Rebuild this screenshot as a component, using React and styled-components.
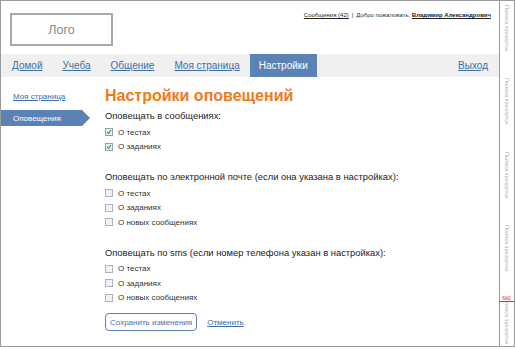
import React from "react";
import styled, { createGlobalStyle } from "styled-components";

const GlobalStyle = createGlobalStyle`
  html, body {
    margin: 0;
    padding: 0;
    background: #fff;
  }
  body {
    font-family: "Liberation Sans", Arial, sans-serif;
    color: #222;
  }
`;

const Frame = styled.div`
  display: flex;
  width: 513px;
  height: 345px;
  border: 1px solid #9a9a9a;
  position: relative;
`;

const Main = styled.div`
  flex: 1;
  display: flex;
  flex-direction: column;
`;

const Header = styled.div`
  display: flex;
  justify-content: space-between;
  align-items: flex-start;
  height: 53px;
  padding: 0 8px 0 9px;
`;

const Logo = styled.div`
  margin-top: 12px;
  width: 99px;
  height: 29px;
  border: 2px solid #a8a8a8;
  display: flex;
  align-items: center;
  justify-content: center;
  color: #888;
  font-size: 12.5px;
`;

const UserBar = styled.div`
  margin-top: 11px;
  font-size: 6px;
  color: #333;
  display: flex;
  gap: 3px;
  a {
    color: #222;
    text-decoration: underline;
  }
  b a {
    font-weight: bold;
  }
`;

const Nav = styled.nav`
  display: flex;
  height: 23px;
  background: #f0f0f0;
  padding-left: 1px;
`;

const NavItem = styled.a`
  display: flex;
  align-items: center;
  padding: 0 ${(p) => (p.$active ? "9px" : "10px")};
  font-size: 10px;
  color: ${(p) => (p.$active ? "#fff" : "#3d6ea8")};
  background: ${(p) => (p.$active ? "#5b82b5" : "transparent")};
  text-decoration: ${(p) => (p.$active ? "none" : "underline")};
  margin-left: ${(p) => (p.$push ? "auto" : "0")};
  padding-right: ${(p) => (p.$push ? "11px" : "")};
`;

const Body = styled.div`
  display: flex;
  flex: 1;
`;

const Sidebar = styled.div`
  width: 104px;
  padding-top: 14px;
  display: flex;
  flex-direction: column;
  gap: 7px;
`;

const SideLink = styled.a`
  font-size: 8px;
  line-height: 12px;
  color: #3d6ea8;
  text-decoration: underline;
  padding-left: 12px;
`;

const SideActive = styled.div`
  position: relative;
  width: 69px;
  height: 16px;
  background: #5b82b5;
  color: #fff;
  font-size: 8px;
  display: flex;
  align-items: center;
  padding-left: 12px;
  &::after {
    content: "";
    position: absolute;
    right: -8px;
    top: 0;
    border-top: 8px solid transparent;
    border-bottom: 8px solid transparent;
    border-left: 8px solid #5b82b5;
  }
`;

const Content = styled.div`
  flex: 1;
  padding-top: 9px;
  display: flex;
  flex-direction: column;
`;

const Title = styled.h1`
  margin: 0 0 4px;
  font-size: 16px;
  line-height: 20px;
  font-weight: bold;
  color: #f07a1a;
`;

const Section = styled.div`
  display: flex;
  flex-direction: column;
  margin-bottom: 17px;
`;

const SectionLabel = styled.div`
  font-size: 9.4px;
  line-height: 12px;
  color: #222;
  margin-bottom: 3px;
`;

const Option = styled.label`
  display: flex;
  align-items: center;
  height: 14.5px;
  font-size: 8px;
  color: #333;
  gap: 5px;
`;

const Box = styled.span`
  width: 6px;
  height: 6px;
  border: 1px solid ${(p) => (p.$checked ? "#8fa5bd" : "#a9b4bf")};
  background: ${(p) => (p.$checked ? "#e6f0f8" : "#eef3f8")};
  display: flex;
  align-items: center;
  justify-content: center;
`;

const Actions = styled.div`
  display: flex;
  align-items: center;
  gap: 10px;
  margin-top: -9px;
`;

const SaveButton = styled.button`
  height: 18px;
  padding: 0 4px;
  border: 1px solid #5b82b5;
  border-radius: 4px;
  background: #fff;
  color: #4a72a8;
  font-family: "Liberation Sans", Arial, sans-serif;
  font-size: 8px;
`;

const CancelLink = styled.a`
  font-size: 8px;
  color: #3d6ea8;
  text-decoration: underline;
`;

const Strip = styled.div`
  width: 14px;
  border-left: 1px solid #9a9a9a;
  display: flex;
  flex-direction: column;
  align-items: center;
  justify-content: space-between;
  padding: 4px 0 2px;
`;

const StripText = styled.span`
  writing-mode: vertical-rl;
  font-size: 5.5px;
  color: #aaa;
  white-space: nowrap;
`;

const Marker = styled.div`
  position: absolute;
  right: 0;
  top: 295px;
  width: 15px;
  border-bottom: 1px solid #e03030;
  color: #e03030;
  font-size: 5px;
  line-height: 5px;
  text-align: center;
`;

const Check = () => (
  <svg width="6" height="6" viewBox="0 0 6 6">
    <path d="M1 3 L2.5 4.5 L5 1.2" fill="none" stroke="#3a9a3a" strokeWidth="1.1" />
  </svg>
);

const CheckOption = ({ checked, children }) => (
  <Option>
    <Box $checked={checked}>{checked ? <Check /> : null}</Box>
    {children}
  </Option>
);

const groups = [
  {
    label: "Оповещать в сообщениях:",
    items: [
      ["О тестах", true],
      ["О заданиях", true],
    ],
  },
  {
    label: "Оповещать по электронной почте (если она указана в настройках):",
    items: [
      ["О тестах", false],
      ["О заданиях", false],
      ["О новых сообщениях", false],
    ],
  },
  {
    label: "Оповещать по sms (если номер телефона указан в настройках):",
    items: [
      ["О тестах", false],
      ["О заданиях", false],
      ["О новых сообщениях", false],
    ],
  },
];

export default function App() {
  return (
    <>
      <GlobalStyle />
      <Frame>
        <Main>
          <Header>
            <Logo>Лого</Logo>
            <UserBar>
              <a href="#">Сообщения (42)</a>
              <span>|</span>
              <span>
                Добро пожаловать, <b><a href="#">Владимир Александрович</a></b>
              </span>
            </UserBar>
          </Header>
          <Nav>
            <NavItem href="#">Домой</NavItem>
            <NavItem href="#">Учеба</NavItem>
            <NavItem href="#">Общение</NavItem>
            <NavItem href="#">Моя страница</NavItem>
            <NavItem href="#" $active>Настройки</NavItem>
            <NavItem href="#" $push>Выход</NavItem>
          </Nav>
          <Body>
            <Sidebar>
              <SideLink href="#">Моя страница</SideLink>
              <SideActive>Оповещения</SideActive>
            </Sidebar>
            <Content>
              <Title>Настройки оповещений</Title>
              {groups.map((g) => (
                <Section key={g.label}>
                  <SectionLabel>{g.label}</SectionLabel>
                  {g.items.map(([text, checked]) => (
                    <CheckOption key={text} checked={checked}>
                      {text}
                    </CheckOption>
                  ))}
                </Section>
              ))}
              <Actions>
                <SaveButton>Сохранить изменения</SaveButton>
                <CancelLink href="#">Отменить</CancelLink>
              </Actions>
            </Content>
          </Body>
        </Main>
        <Strip>
          <StripText>Полоса прокрутки</StripText>
          <StripText>Полоса прокрутки</StripText>
          <StripText>Полоса прокрутки</StripText>
          <StripText>Полоса прокрутки</StripText>
          <StripText>Полоса прокрутки</StripText>
        </Strip>
        <Marker>600</Marker>
      </Frame>
    </>
  );
}
